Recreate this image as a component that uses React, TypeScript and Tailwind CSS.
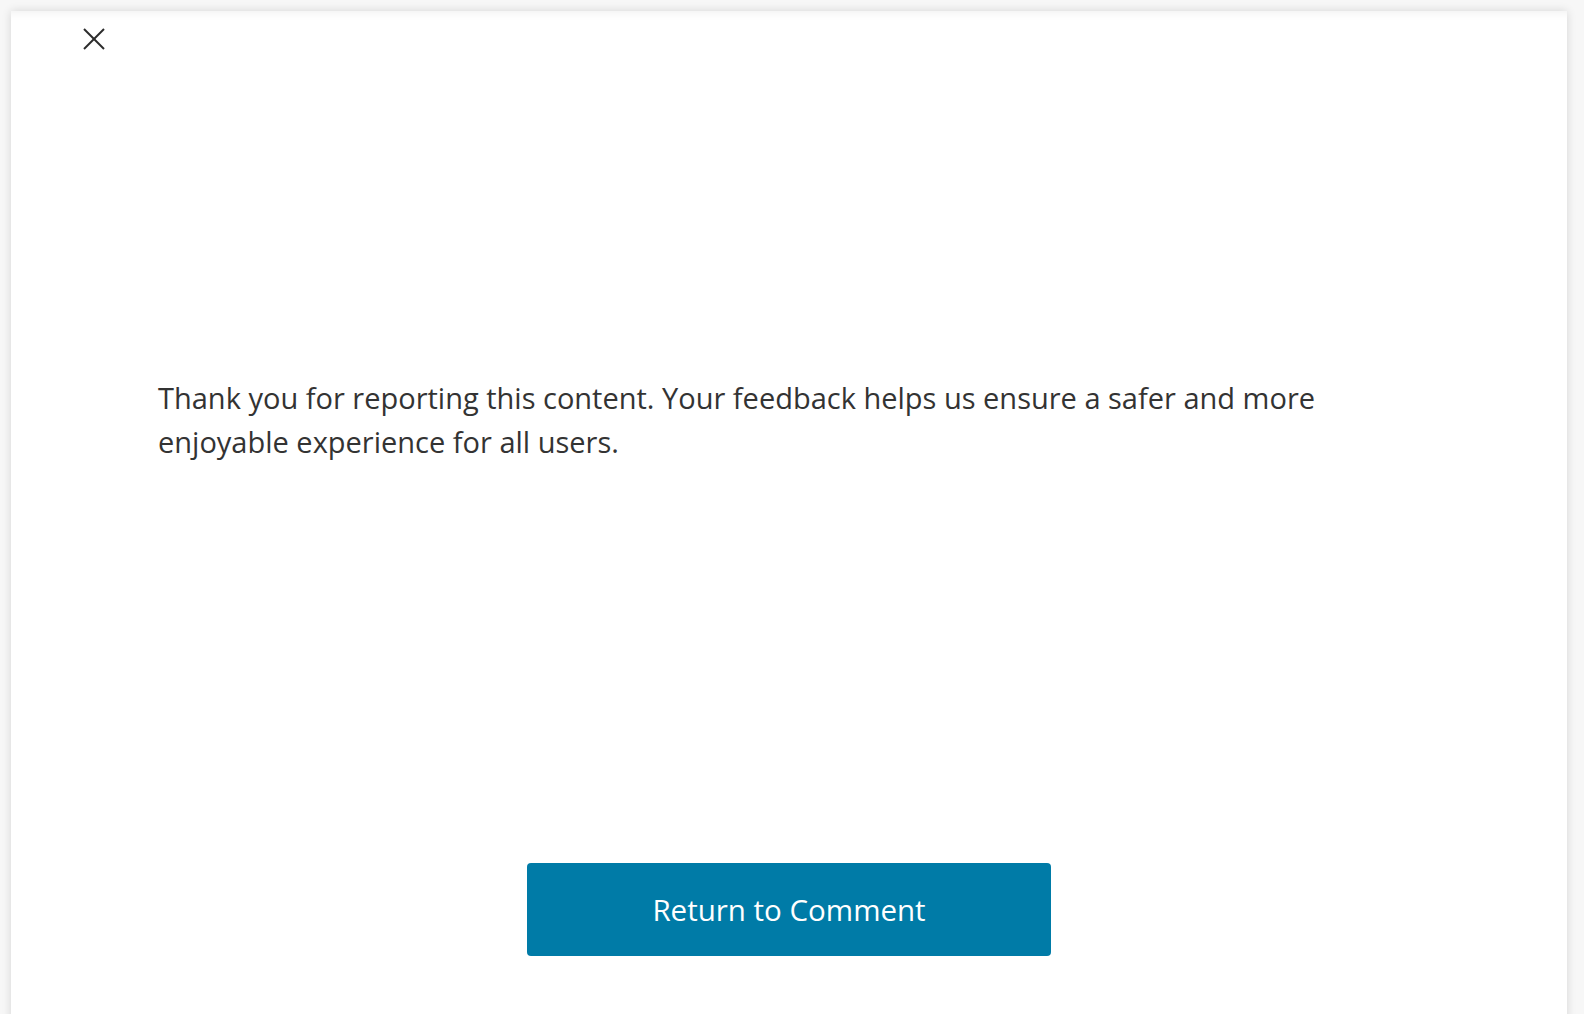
import React from "react";

// Confirmation panel shown after a comment has been reported
function CloseIcon() {
  return (
    <svg width="22" height="22" viewBox="0 0 22 22" fill="none" stroke="#2b2b2b" strokeWidth="2" strokeLinecap="butt">
      <path d="M1 1 L21 21" />
      <path d="M21 1 L1 21" />
    </svg>
  );
}

export default function App() {
  return (
    <div
      className="relative h-[1014px] w-full overflow-hidden bg-[#f7f7f7] pl-[11px] pr-[17px] pt-[11px]"
      style={{ fontFamily: '"Open Sans", "Noto Sans", Arial, sans-serif' }}
    >
      <div className="flex h-[1100px] flex-col bg-white shadow-[inset_0_10px_10px_-8px_rgba(0,0,0,0.06),0_0_9px_rgba(0,0,0,0.14)]">
        <div className="pl-[72px] pt-[17px]">
          <button type="button" aria-label="Close" className="block h-[22px] w-[22px]">
            <CloseIcon />
          </button>
        </div>

        <p className="ml-[147px] mt-[326px] w-[1240px] text-[29px] leading-[44px] text-[#333333]">
          Thank you for reporting this content. Your feedback helps us ensure a safer and more enjoyable experience for all users.
        </p>

        <button
          type="button"
          className="mx-auto mt-[399px] flex h-[93px] w-[524px] items-center justify-center rounded-[4px] bg-[#007ba7] pt-[2px] text-[29.5px] text-white"
        >
          Return to Comment
        </button>
      </div>
    </div>
  );
}
